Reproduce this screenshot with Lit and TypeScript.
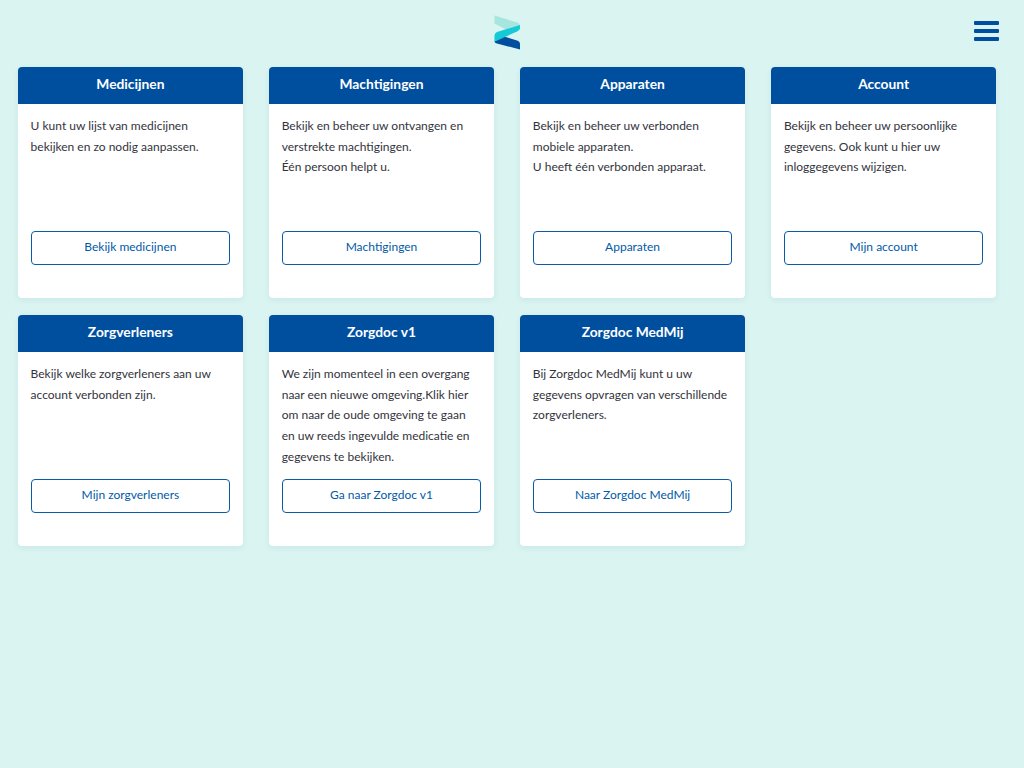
import { LitElement, html, css, svg } from "lit";
import { customElement } from "lit/decorators.js";

const cards = [
  { t: "Medicijnen", b: ["U kunt uw lijst van medicijnen", "bekijken en zo nodig aanpassen."], a: "Bekijk medicijnen" },
  { t: "Machtigingen", b: ["Bekijk en beheer uw ontvangen en", "verstrekte machtigingen.", "Één persoon helpt u."], a: "Machtigingen" },
  { t: "Apparaten", b: ["Bekijk en beheer uw verbonden", "mobiele apparaten.", "U heeft één verbonden apparaat."], a: "Apparaten" },
  { t: "Account", b: ["Bekijk en beheer uw persoonlijke", "gegevens. Ook kunt u hier uw", "inloggegevens wijzigen."], a: "Mijn account" },
  { t: "Zorgverleners", b: ["Bekijk welke zorgverleners aan uw", "account verbonden zijn."], a: "Mijn zorgverleners" },
  { t: "Zorgdoc v1", b: ["We zijn momenteel in een overgang", "naar een nieuwe omgeving.Klik hier", "om naar de oude omgeving te gaan", "en uw reeds ingevulde medicatie en", "gegevens te bekijken."], a: "Ga naar Zorgdoc v1" },
  { t: "Zorgdoc MedMij", b: ["Bij Zorgdoc MedMij kunt u uw", "gegevens opvragen van verschillende", "zorgverleners."], a: "Naar Zorgdoc MedMij" },
];

@customElement("app-root")
export class AppRoot extends LitElement {
  static styles = css`
    :host {
      display: block;
      min-height: 768px;
      background: #d9f4f1;
      font-family: Lato, "Open Sans", sans-serif;
      color: #33333d;
    }
    .top {
      display: flex;
      justify-content: space-between;
      align-items: flex-start;
      height: 67px;
      padding: 0 25.3px 0 493.5px;
      box-sizing: border-box;
    }
    .logo {
      display: block;
      margin-top: 15px;
    }
    .menu {
      margin-top: 21px;
      display: flex;
      flex-direction: column;
      gap: 3.7px;
      width: 25px;
    }
    .menu span {
      height: 4.3px;
      border-radius: 1px;
      background: #004f9f;
    }
    .grid {
      display: grid;
      grid-template-columns: repeat(4, 225.6px);
      column-gap: 25.5px;
      row-gap: 17px;
      padding-left: 17.6px;
    }
    .card {
      height: 231px;
      background: #fff;
      border-radius: 4px;
      box-shadow: 0 2px 6px rgba(0, 80, 120, 0.07);
      display: flex;
      flex-direction: column;
      overflow: hidden;
    }
    .head {
      height: 37px;
      background: #004f9f;
      color: #fff;
      font-size: 13.8px;
      font-weight: 700;
      line-height: 33px;
      text-align: center;
    }
    .body {
      height: 127px;
      padding: 12px 13px 0;
      font-size: 12px;
      line-height: 20.7px;
      box-sizing: border-box;
    }
    .body div {
      white-space: nowrap;
    }
    .btn {
      margin: 0 13px;
      height: 34px;
      box-sizing: border-box;
      border: 1px solid #0a5ca8;
      border-radius: 4px;
      color: #005aa8;
      background: #fff;
      font-size: 12px;
      line-height: 30px;
      text-align: center;
    }
  `;

  render() {
    return html`
      <div class="top">
        <svg class="logo" width="27" height="36" viewBox="0 0 27 36" aria-label="logo">
          ${svg`
            <path d="M0.500 0.500 L23 7.500 Q26 8.500 26 11 V14 L13 15 L0.500 8.500 Z" fill="#a6e6de"/>
            <path d="M0.500 26 L10 21.500 L23 25.500 Q26 26.500 26 29 V34.500 L3 28.500 Q0.500 28 0.500 26 Z" fill="#004f9f"/>
            <path d="M26 10 V13 Q26 15 23 16.500 L0.500 26.700 V20.500 Q0.500 18 3 17 Z" fill="#16c9d6"/>
          `}
        </svg>
        <div class="menu"><span></span><span></span><span></span></div>
      </div>
      <div class="grid">
        ${cards.map(
          (c) => html`
            <section class="card">
              <div class="head">${c.t}</div>
              <div class="body">${c.b.map((l) => html`<div>${l}</div>`)}</div>
              <div class="btn">${c.a}</div>
            </section>
          `
        )}
      </div>
    `;
  }
}
